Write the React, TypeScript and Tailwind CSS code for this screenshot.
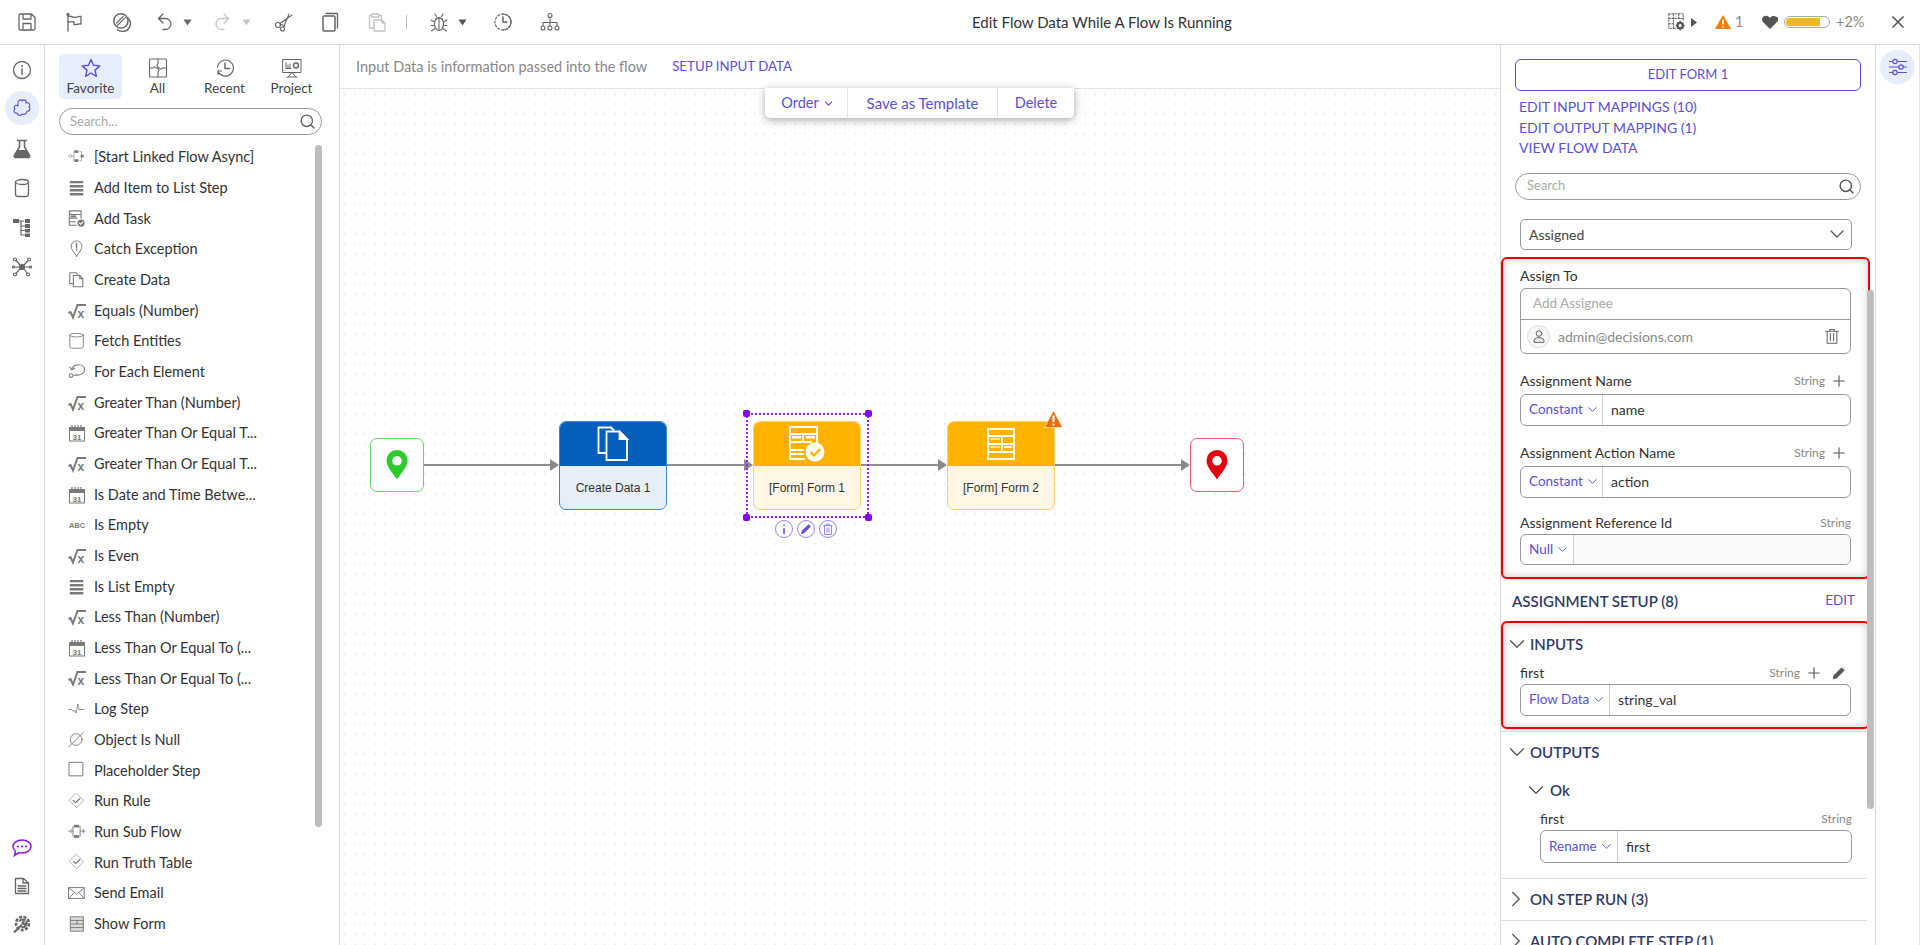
import React from 'react';
import { ChevronDown, ChevronRight, Plus, Search, X } from 'lucide-react';

type IconKind =
  | 'flow' | 'list' | 'task' | 'pin' | 'copy' | 'sqrt' | 'db' | 'loop' | 'cal'
  | 'abc' | 'pulse' | 'null' | 'square' | 'check' | 'sub' | 'mail' | 'form';

const STEPS: [IconKind, string][] = [
  ['flow', '[Start Linked Flow Async]'],
  ['list', 'Add Item to List Step'],
  ['task', 'Add Task'],
  ['pin', 'Catch Exception'],
  ['copy', 'Create Data'],
  ['sqrt', 'Equals (Number)'],
  ['db', 'Fetch Entities'],
  ['loop', 'For Each Element'],
  ['sqrt', 'Greater Than (Number)'],
  ['cal', 'Greater Than Or Equal T...'],
  ['sqrt', 'Greater Than Or Equal T...'],
  ['cal', 'Is Date and Time Betwe...'],
  ['abc', 'Is Empty'],
  ['sqrt', 'Is Even'],
  ['list', 'Is List Empty'],
  ['sqrt', 'Less Than (Number)'],
  ['cal', 'Less Than Or Equal To (...'],
  ['sqrt', 'Less Than Or Equal To (...'],
  ['pulse', 'Log Step'],
  ['null', 'Object Is Null'],
  ['square', 'Placeholder Step'],
  ['check', 'Run Rule'],
  ['sub', 'Run Sub Flow'],
  ['check', 'Run Truth Table'],
  ['mail', 'Send Email'],
  ['form', 'Show Form'],
];

const Svg = ({ size = 20, color = '#666', sw = 1.3, children }: { size?: number; color?: string; sw?: number; children: React.ReactNode }) => (
  <svg width={size} height={size} viewBox="0 0 20 20" fill="none" stroke={color} strokeWidth={sw} strokeLinecap="round" strokeLinejoin="round" className="shrink-0">
    {children}
  </svg>
);

const Caret = ({ color = '#666' }: { color?: string }) => (
  <svg width="9" height="7" viewBox="0 0 9 7" className="shrink-0"><path d="M0.5 0.5h8L4.5 6.5z" fill={color} /></svg>
);

const StepIcon = ({ kind }: { kind: IconKind }) => {
  const c = '#7a7a7a';
  switch (kind) {
    case 'flow':
      return (
        <Svg size={18} color="#8a8a8a" sw={1}>
          <circle cx="2.5" cy="9" r="1.6" stroke="#aaa" />
          <rect x="7" y="2.5" width="4.5" height="3" fill={c} stroke="none" />
          <rect x="7" y="12.5" width="4.5" height="3" fill={c} stroke="none" />
          <path d="M4 9h2.5M6.5 4v10M13 4h2v10h-2" stroke="#aaa" />
          <rect x="14" y="7.5" width="3.5" height="3" fill={c} stroke="none" />
        </Svg>
      );
    case 'list':
      return (
        <Svg size={18} color={c} sw={2.700}>
          <path d="M2 3.500h15M2 8h15M2 12.500h15M2 17h15" strokeLinecap="butt" />
        </Svg>
      );
    case 'task':
      return (
        <Svg size={18} color={c} sw={1.2}>
          <path d="M9 17H1.500V1h13v8" />
          <path d="M2 5h12M2 9h8M2 13h6" />
          <rect x="3" y="6" width="6" height="2" fill={c} stroke="none" />
          <circle cx="14.500" cy="14.500" r="4" fill={c} stroke="none" />
          <path d="M12.700 14.500l1.400 1.400 2.300-2.500" stroke="#fff" />
        </Svg>
      );
    case 'pin':
      return (
        <Svg size={18} color={c} sw={1.1}>
          <path d="M9.500 18C6.500 13.500 3.500 10.500 3.500 7a6 6 0 0 1 12 0c0 3.500-3 6.500-6 11z" />
          <path d="M9.500 3.500v5M9.500 10.300v.8" strokeWidth="1.500" />
        </Svg>
      );
    case 'copy':
      return (
        <Svg size={18} color={c} sw={1.2}>
          <path d="M5 14H2V2h7l2 2" />
          <path d="M6 5h7l3.500 3.500V17.500H6zM13 5v3.500h3.500" />
        </Svg>
      );
    case 'sqrt':
      return (
        <svg width="18" height="18" viewBox="0 0 18 18" className="shrink-0">
          <path d="M0.500 11l2-1 2.500 5.500L9.500 3H18" fill="none" stroke={c} strokeWidth="2" />
          <text x="9.500" y="15.500" fontSize="12" fontWeight="700" fill={c} fontFamily="Liberation Sans, sans-serif">x</text>
        </svg>
      );
    case 'db':
      return (
        <Svg size={18} color={c} sw={1}>
          <ellipse cx="9.500" cy="3.500" rx="7.500" ry="2" />
          <path d="M2 3.500V16q0 2 2 2h11q2 0 2-2V3.500" />
        </Svg>
      );
    case 'loop':
      return (
        <Svg size={18} color={c} sw={1.2}>
          <path d="M4 7.500C5 3 9 2 12 2c4 0 6.500 2.500 6.500 5.500S15.500 13.500 11 13.500H7" />
          <path d="M4.500 7.500L2 4.500M4.500 7.500l3-2" />
          <circle cx="3.500" cy="14" r="2" />
        </Svg>
      );
    case 'cal':
      return (
        <svg width="18" height="18" viewBox="0 0 18 18" className="shrink-0">
          <rect x="1.500" y="3.500" width="15" height="13.500" fill="none" stroke={c} />
          <path d="M1.500 4h15v3h-15z" fill={c} />
          <path d="M4 1v3M7 1v3M10 1v3M13 1v3" stroke={c} strokeWidth="1.200" />
          <text x="9" y="15.500" fontSize="8" fontWeight="700" textAnchor="middle" fill={c} fontFamily="Liberation Sans, sans-serif">31</text>
        </svg>
      );
    case 'abc':
      return (
        <svg width="18" height="18" viewBox="0 0 18 18" className="shrink-0">
          <text x="9" y="12" fontSize="7.500" fontWeight="700" textAnchor="middle" fill={c} fontFamily="Liberation Sans, sans-serif">ABC</text>
        </svg>
      );
    case 'pulse':
      return (
        <Svg size={18} color={c} sw={0.9}>
          <path d="M0 10.500h4l1.500 2 2-1 1.500 3 2-10 1.500 7 1-1h4.500" />
        </Svg>
      );
    case 'null':
      return (
        <Svg size={18} color={c} sw={1}>
          <circle cx="9" cy="9.500" r="6.500" />
          <path d="M1 17.500L17 1.500" />
        </Svg>
      );
    case 'square':
      return (
        <Svg size={18} color={c} sw={1.100}>
          <rect x="1.500" y="1.500" width="15" height="15" />
        </Svg>
      );
    case 'check':
      return (
        <Svg size={18} color="#aaa" sw={1}>
          <path d="M9.500 1.500l8 8-8 8-8-8z" />
          <path d="M6 9.500l2.500 2.300 4.500-4.300" stroke="#777" strokeWidth="1.400" />
        </Svg>
      );
    case 'sub':
      return (
        <Svg size={18} color={c} sw={1}>
          <path d="M0.500 9H4M3 7l2 2-2 2M14 9h5M17 7v4" />
          <rect x="6.500" y="2" width="6" height="3" fill={c} stroke="none" />
          <rect x="6.500" y="13.500" width="6" height="3" fill={c} stroke="none" />
          <path d="M5.500 4v10.500M13.500 4v10.500" />
        </Svg>
      );
    case 'mail':
      return (
        <Svg size={18} color={c} sw={1.100}>
          <rect x="1" y="4" width="17" height="12" />
          <path d="M1 4.500l8.500 6.500L18 4.500M1 16l6-6.500M18 16l-6-6.500" />
        </Svg>
      );
    case 'form':
      return (
        <Svg size={18} color={c} sw={1.100}>
          <rect x="3" y="2" width="14" height="16" fill="#ddd" />
          <path d="M3 6h14M3 10h14M3 14h14M10 6v4" />
        </Svg>
      );
  }
};

const TopBar = () => (
  <header className="h-[45px] shrink-0 border-b border-[#d9d9d9] flex items-center text-[#333]">
    <div className="w-[972px] shrink-0 flex items-center pl-[17px]">
      <div className="w-[47px]">
        <Svg><path d="M2 3.500Q2 2 3.500 2h11L18 5.500v11q0 1.500-1.500 1.500h-13Q2 18 2 16.500zM6 2v5h8V2M6 18v-6.500h8V18" /></Svg>
      </div>
      <div className="w-[47px]">
        <Svg><path d="M4 3v16M4 4.500c3-1 5 1 7 1s3-1.500 6-1V12c-3-.5-4 1-7 .5V10c-2-.5-4-.5-6 .5" /><circle cx="4" cy="2.500" r="1" /></Svg>
      </div>
      <div className="w-[44px]">
        <Svg size={22}>
          <circle cx="9" cy="9" r="6.500" />
          <path d="M15.500 6.500a7 7 0 0 1-5.500 12 6 6 0 0 1-4-1.500" />
          <path d="M5 11l6-6M6 13l7-7" strokeWidth="1.100" />
        </Svg>
      </div>
      <div className="w-[57px] flex items-center gap-[8px]">
        <Svg><path d="M8 2L3.500 6.500 8 11M4 6.500h6.500a4.500 4.500 0 0 1 0 11H8" /></Svg>
        <Caret />
      </div>
      <div className="w-[62px] flex items-center gap-[10px]">
        <Svg color="#c4c4c4"><path d="M12 2l4.500 4.500L12 11M16 6.500H9.500a4.500 4.500 0 0 0 0 11H12" /></Svg>
        <Caret color="#c4c4c4" />
      </div>
      <div className="w-[47px]">
        <Svg sw={1.100}><circle cx="4" cy="13" r="2.500" /><circle cx="8.500" cy="17" r="2" /><path d="M6 11.500L18 3M9.500 15.500L15 2M6 12l5 2" /></Svg>
      </div>
      <div className="w-[46px]">
        <Svg><rect x="2" y="4" width="12" height="15" rx="1" strokeWidth="1.500" /><path d="M5 1.500h11.500V16" /></Svg>
      </div>
      <div className="w-[39px]">
        <Svg color="#c4c4c4"><path d="M7 16H2.500V3.500H5M12 3.500h2.500V7M5 2h7v3H5z" /><path d="M7 8h8l3 3v8H7zM15 8v3h3" /></Svg>
      </div>
      <div className="w-px h-[14px] bg-[#bbb] mr-[22px]" />
      <div className="w-[30px]">
        <Svg size={20} sw={1.100}><ellipse cx="10" cy="12" rx="4.500" ry="6.500" /><path d="M6.500 7.500q3.500-3.500 7 0M7.500 4.500L6 2M12.500 4.500L14 2M5.500 10L2 8M5.500 13.500H2M6 16.500l-3.500 2.500M14.500 10L18 8M14.500 13.500H18M14 16.500l3.500 2.500M10 6v12" /></Svg>
      </div>
      <div className="mr-[31px] -ml-[1px]"><Caret color="#555" /></div>
      <div className="w-[47px] -ml-[5px]">
        <Svg sw={1.200}><circle cx="10" cy="10" r="8" strokeDasharray="2 2" /><path d="M10 5v5h4" strokeWidth="1.500" /><path d="M10 2a8 8 0 0 1 8 8 8 8 0 0 1-8 8" /></Svg>
      </div>
      <Svg sw={1.100}>
        <circle cx="10" cy="3.500" r="2" /><circle cx="3" cy="16" r="2" /><circle cx="10" cy="16" r="2" /><circle cx="17" cy="16" r="2" />
        <path d="M10 5.500V14M3 14v-3.500h14V14" />
      </Svg>
    </div>
    <div className="text-[15px]">Edit Flow Data While A Flow Is Running</div>
    <div className="ml-auto flex items-center text-[14.500px] text-[#888] pr-[12px]">
      <Svg size={18} color="#555" sw={1}>
        <path d="M1 1h16v8M1 1v16h8" strokeDasharray="2 1.500" />
        <path d="M1 6h16M1 12h7M6 1v16M12 1v7" strokeDasharray="2 1.500" />
        <circle cx="13.500" cy="14" r="3" strokeWidth="2.500" />
        <path d="M13.500 9v2M13.500 17v2M9 14h2M16 14h2M10.500 11l1 1M16.500 11l-1 1M10.500 17l1-1M16.500 17l-1-1" strokeWidth="1.500" />
      </Svg>
      <svg width="6" height="9" viewBox="0 0 6 9" className="ml-[5px] mr-[18px]"><path d="M0 0l6 4.500L0 9z" fill="#555" /></svg>
      <svg width="16" height="14" viewBox="0 0 16 14"><path d="M8 0l8 14H0z" fill="#f57c00" /><path d="M8 4.500v5M8 11v1.500" stroke="#fff" strokeWidth="1.600" /></svg>
      <span className="ml-[4px] w-[27px]">1</span>
      <svg width="16" height="14" viewBox="0 0 16 14"><path d="M8 14L1 7Q-1 4 1 2t4.500-1Q7 1.500 8 3q1-1.500 2.500-2T15 2t0 5z" fill="#555" /></svg>
      <div className="ml-[6px] w-[46px] h-[12px] border border-[#aaa] rounded-full p-px">
        <div className="h-full w-[34px] bg-[#f0b81f] rounded-l-full" />
      </div>
      <span className="ml-[6px] w-[52px]">+2%</span>
      <X size={20} color="#555" strokeWidth={2} />
    </div>
  </header>
);

const LeftRail = () => (
  <nav className="w-[45px] shrink-0 border-r border-[#d9d9d9] flex flex-col items-center pt-[5px] pb-[2px]">
    <div className="h-[39px] flex items-center">
      <Svg><circle cx="10" cy="10" r="8.500" /><path d="M10 9v5.500M10 5.500v1" strokeWidth="1.500" /></Svg>
    </div>
    <div className="w-[34px] h-[34px] rounded-full bg-[#e6edfc] flex items-center justify-center mt-[2px]">
      <Svg color="#5a4fd8" sw={1.100}>
        <path d="M6 5c0-3 3-4 4-2 1-2 5-1 4 2 3-1 5 2 3 4 2 2 0 5-2 4 0 3-3 4-5 3-1 2-4 2-5-1-3 1-4-3-2-4-2-2 0-5 3-3z" />
      </Svg>
    </div>
    <div className="h-[39px] flex items-center mt-[4px]">
      <svg width="20" height="20" viewBox="0 0 20 20"><path d="M5 1.500h10M7.500 2v6L2.500 16q-1 2 1 2.500h13q2-.5 1-2.500L12.500 8V2" fill="none" stroke="#666" strokeWidth="1.500" /><path d="M5.500 11h9l3 6q0 1.500-1 1.500h-13q-1 0-1-1.500z" fill="#666" /></svg>
    </div>
    <div className="h-[40px] flex items-center">
      <Svg><ellipse cx="10" cy="4" rx="6.500" ry="2.500" /><path d="M3.500 4v12q0 2.500 2.500 2.500h8q2.500 0 2.500-2.500V4" /></Svg>
    </div>
    <div className="h-[39px] flex items-center">
      <svg width="20" height="20" viewBox="0 0 20 20"><path d="M7 3h5M9 3v14h4M9 8h4M9 12.500h4" fill="none" stroke="#666" strokeWidth="1.200" /><rect x="1" y="1" width="6" height="4" fill="#666" /><rect x="13" y="1" width="5" height="4" fill="#666" /><rect x="13" y="6" width="5" height="4" fill="#666" /><rect x="13" y="11" width="5" height="3.500" fill="#666" /><rect x="13" y="15.500" width="5" height="3.500" fill="#666" /></svg>
    </div>
    <div className="h-[40px] flex items-center">
      <Svg sw={1.200}>
        <circle cx="10" cy="10" r="2.500" fill="#666" />
        <path d="M8 8L4 3.500M12 8l4-4.500M8 12l-4 4.500M12 12l3 4M7.500 10H2.500M12.500 10h5" />
        <circle cx="3" cy="2.500" r="1.500" /><circle cx="17" cy="2.500" r="1.500" /><circle cx="3" cy="17.500" r="1.500" /><circle cx="16" cy="17.500" r="1.500" /><circle cx="1.500" cy="10" r="1" /><circle cx="18.500" cy="10" r="1" />
      </Svg>
    </div>
    <div className="mt-auto h-[38px] flex items-center">
      <svg width="20" height="18" viewBox="0 0 20 18"><path d="M10 1c5 0 9 2.800 9 6.500S15 14 10 14c-1 0-2 0-3-.4L2.500 16.500 3.500 12.500C2 11 1 9.500 1 7.500 1 3.800 5 1 10 1z" fill="none" stroke="#8a14e8" strokeWidth="1.500" /><circle cx="6" cy="7.500" r="1.100" fill="#8a14e8" /><circle cx="10" cy="7.500" r="1.100" fill="#8a14e8" /><circle cx="14" cy="7.500" r="1.100" fill="#8a14e8" /></svg>
    </div>
    <div className="h-[38px] flex items-center">
      <Svg><path d="M3.500 2.500h8L16.500 7v10.500h-13zM11 2.500V7h5.500M6 10h8M6 12.500h8M6 15h8" /></Svg>
    </div>
    <div className="h-[38px] flex items-center">
      <svg width="20" height="20" viewBox="0 0 20 20">
        <circle cx="10.500" cy="9.500" r="6.500" fill="none" stroke="#666" strokeWidth="2.600" strokeDasharray="3 1.400" />
        <path d="M2 18.500L10 10.500M7.500 7.500a4 4 0 0 1 5-1.500l-2 3 2 1.500 2-2.500a4 4 0 0 1-5 5" fill="none" stroke="#666" strokeWidth="2" />
      </svg>
    </div>
  </nav>
);

const Tab = ({ label, active, children }: { label: string; active?: boolean; children: React.ReactNode }) => (
  <div className={`w-[63px] h-[45px] rounded-[5px] flex flex-col items-center pt-[4px] ${active ? 'bg-[#e6edfc]' : ''}`}>
    <div className="h-[20px] flex items-center">{children}</div>
    <div className="text-[13.500px] leading-[16px] mt-[2px] text-[#444]">{label}</div>
  </div>
);

const Palette = () => (
  <aside className="w-[295px] shrink-0 border-r border-[#d9d9d9] relative overflow-hidden">
    <div className="flex gap-[4px] pl-[14px] pt-[9px]">
      <Tab label="Favorite" active>
        <svg width="20" height="20" viewBox="0 0 20 20"><path d="M10 1.500l2.500 5.800 6.300.6-4.800 4.200 1.400 6.200L10 15l-5.400 3.300L6 12.100 1.200 7.900l6.300-.6z" fill="none" stroke="#5a4fd8" strokeWidth="1.400" strokeLinejoin="round" /></svg>
      </Tab>
      <Tab label="All">
        <Svg sw={1.100}>
          <rect x="1.500" y="1" width="17" height="18" rx="1" />
          <path d="M10 1v5q-2 1 0 3v2q2 1 0 3v5M1.500 10h4q1-2 3 0h3q1 2 3 0h4" />
        </Svg>
      </Tab>
      <Tab label="Recent">
        <Svg sw={1.200}>
          <path d="M3 13a8 8 0 1 0-.5-4M3 16.500V13h3.500" />
          <path d="M10 5v5.500h4.500" strokeWidth="1.500" />
        </Svg>
      </Tab>
      <Tab label="Project">
        <Svg sw={1}>
          <rect x="1" y="1.500" width="18" height="13" />
          <path d="M4 4.500v6h5M6 10V7M8 10V6M6 19l4-4.500 4 4.500M5 19h10" />
          <circle cx="14" cy="7.500" r="2.500" strokeWidth="1.400" />
        </Svg>
      </Tab>
    </div>
    <div className="ml-[14px] mt-[9px] w-[263px] h-[27px] rounded-full border border-[#999] flex items-center pl-[10px] pr-[5px] text-[13px] text-[#aaa]">
      Search...
      <Search size={17} color="#666" strokeWidth={2} className="ml-auto" />
    </div>
    <ul className="mt-[7px]">
      {STEPS.map(([kind, label], i) => (
        <li key={i} className="h-[30.670px] flex items-center gap-[8px] pl-[23px] text-[14.500px] text-[#333] whitespace-nowrap">
          <StepIcon kind={kind} />
          <span>{label}</span>
        </li>
      ))}
    </ul>
    <div className="absolute left-[270px] top-[100px] w-[7px] h-[682px] bg-[#bdbdbd] rounded-full" />
  </aside>
);

const Arrow = ({ left, width }: { left: number; width: number }) => (
  <div className="absolute h-[12px] flex items-center" style={{ left, width, top: 370 }}>
    <div className="flex-1 h-[1.500px] bg-[#8f8f8f]" />
    <svg width="9" height="12" viewBox="0 0 9 12" className="shrink-0"><path d="M0 0l9 6-9 6z" fill="#8a8a8a" /></svg>
  </div>
);

const MarkerPin = ({ color }: { color: string }) => (
  <svg width="22" height="30" viewBox="0 0 22 30"><path fillRule="evenodd" d="M11 29.500C7 23 .500 17.500.500 10.500a10.500 10.500 0 0 1 21 0C21.500 17.500 15 23 11 29.500zM11 6a4.800 4.800 0 1 0 0 9.600A4.800 4.800 0 0 0 11 6z" fill={color} /></svg>
);

const StepNode = ({ label, head, body, border, children, x }: { label: string; head: string; body: string; border: string; children: React.ReactNode; x: number }) => (
  <div className="absolute w-[108px] h-[89px] rounded-[7px] border overflow-hidden flex flex-col font-['Liberation_Sans',sans-serif]" style={{ left: x, top: 332, borderColor: border, background: body }}>
    <div className="h-[44px] shrink-0 flex items-center justify-center" style={{ background: head }}>{children}</div>
    <div className="flex-1 flex items-center justify-center text-[12px] text-[#333]">{label}</div>
  </div>
);

const Handle = ({ className }: { className: string }) => (
  <div className={`absolute w-[7px] h-[7px] rounded-[2px] bg-[#8a00f0] ${className}`} />
);

const Canvas = () => (
  <main className="w-[1160px] shrink-0 flex flex-col">
    <div className="h-[44px] shrink-0 border-b border-[#e3e3e3] flex items-center pl-[16px] text-[14.500px] text-[#888]">
      <span>Input Data is information passed into the flow</span>
      <span className="ml-[25px] text-[#5a4fd8] text-[13.300px]">SETUP INPUT DATA</span>
    </div>
    <div className="relative flex-1 bg-[radial-gradient(#dedede_0.6px,transparent_0.8px)] bg-[length:10px_10px]">
      <div className="absolute left-[425px] top-[-1px] h-[30px] w-[309px] bg-white rounded-b-[5px] shadow-[0_2px_8px_rgba(0,0,0,0.35)] flex items-center text-[14.500px] text-[#5a4fd8]">
        <div className="w-[83px] h-full border-r border-[#e3e3e3] flex items-center justify-center gap-[3px] pl-[4px]">
          Order <ChevronDown size={13} />
        </div>
        <div className="w-[150px] h-full border-r border-[#e3e3e3] flex items-center justify-center text-[15px]">Save as Template</div>
        <div className="flex-1 flex items-center justify-center">Delete</div>
      </div>

      <Arrow left={84} width={135} />
      <Arrow left={327} width={86} />
      <Arrow left={521} width={86} />
      <Arrow left={715} width={135} />

      <div className="absolute left-[30px] top-[349px] w-[54px] h-[54px] rounded-[7px] border border-[#62d862] bg-white flex items-center justify-center">
        <MarkerPin color="#2ccb2c" />
      </div>

      <StepNode x={219} label="Create Data 1" head="#035fba" body="#e6eef8" border="#3f88cf">
        <svg width="32" height="36" viewBox="0 0 32 36" fill="none" stroke="#fff" strokeWidth="1.800"><path d="M9 27H1.500V1.500H14l3 3" /><path d="M9.500 5.500h13L30 13v21H9.500zM22.500 6v7H30" /><path d="M23 6l7 7h-7z" fill="#fff" /></svg>
      </StepNode>

      <StepNode x={413} label="[Form] Form 1" head="#ffb300" body="#fff6e5" border="#ffd071">
        <svg width="36" height="36" viewBox="0 0 36 36" fill="none" stroke="#fff" strokeWidth="1.800">
          <path d="M16 33H1V1h27v16" />
          <path d="M1 8h27M1 16h22M1 24h14M1 28h14M14 8v8" />
          <rect x="3" y="10" width="9" height="2.500" fill="#fff" stroke="none" />
          <rect x="17" y="10" width="9" height="2.500" fill="#fff" stroke="none" />
          <circle cx="26" cy="26" r="9.500" fill="#fff" stroke="none" />
          <path d="M21.500 26l3.500 3.500 6-6.500" stroke="#ffb300" strokeWidth="2.400" />
        </svg>
      </StepNode>

      <div className="absolute left-[406px] top-[324px] w-[123px] h-[105px] border-2 border-dotted border-[#9a1ff0]">
        <Handle className="left-[-5px] top-[-5px]" />
        <Handle className="right-[-5px] top-[-5px]" />
        <Handle className="left-[-5px] bottom-[-5px]" />
        <Handle className="right-[-5px] bottom-[-5px]" />
      </div>

      <div className="absolute left-[435px] top-[431px] flex gap-[4px]">
        <div className="w-[18px] h-[18px] rounded-full border border-[#8f88e6] flex items-center justify-center text-[#5a4fd8]">
          <svg width="10" height="12" viewBox="0 0 10 12"><path d="M5 5v6M5 1.500v1.500" stroke="#5a4fd8" strokeWidth="1.500" /></svg>
        </div>
        <div className="w-[18px] h-[18px] rounded-full border border-[#8f88e6] flex items-center justify-center">
          <svg width="12" height="12" viewBox="0 0 12 12"><path d="M1 11l.7-3L8.500 1.200 10.800 3.500 4 10.300z" fill="#5a4fd8" /></svg>
        </div>
        <div className="w-[18px] h-[18px] rounded-full border border-[#8f88e6] flex items-center justify-center">
          <svg width="12" height="12" viewBox="0 0 12 12" fill="none" stroke="#8f88e6"><path d="M1.500 2.500h9M4.500 2.500V1h3v1.500M2.500 2.500v9h7v-9M5 4.500v5M7 4.500v5" /></svg>
        </div>
      </div>

      <StepNode x={607} label="[Form] Form 2" head="#ffb300" body="#fff6e5" border="#ffd071">
        <svg width="28" height="32" viewBox="0 0 28 32" fill="none" stroke="#fff" strokeWidth="1.800">
          <rect x="1" y="1" width="26" height="30" />
          <path d="M1 8h26M1 16h26M1 24h26M15 8v8M15 24V16" />
          <rect x="3" y="10" width="10" height="2" fill="#ffe08a" stroke="none" />
          <rect x="17" y="18" width="8" height="2" fill="#fff" stroke="none" />
          <rect x="3" y="18" width="10" height="2" fill="#ffe08a" stroke="none" />
        </svg>
      </StepNode>
      <svg width="19" height="18" viewBox="0 0 19 18" className="absolute left-[704px] top-[321px]"><path d="M9.500 0.500l9 17h-18z" fill="#ef6c00" stroke="#fff" strokeWidth="0.600" /><path d="M9.500 5.500v6.500M9.500 13.500v2" stroke="#fff" strokeWidth="2.200" /></svg>

      <div className="absolute left-[850px] top-[349px] w-[54px] h-[54px] rounded-[7px] border border-[#ee5c68] bg-white flex items-center justify-center">
        <MarkerPin color="#e3000f" />
      </div>
    </div>
  </main>
);

const Label = ({ children }: { children: React.ReactNode }) => (
  <span className="text-[14px] text-[#333] leading-[20px]">{children}</span>
);

const TypeTag = () => <span className="text-[12px] text-[#888] leading-[16px]">String</span>;

const MappedInput = ({ mode, value, modeWidth, height = 32 }: { mode: string; value?: string; modeWidth: number; height?: number }) => (
  <div className="border border-[#999] rounded-[6px] flex items-center text-[14px] overflow-hidden whitespace-nowrap" style={{ height }}>
    <div className="h-full shrink-0 border-r border-[#ccc] flex items-center pl-[8px] gap-[2px] text-[13.500px] text-[#5a4fd8]" style={{ width: modeWidth }}>
      {mode}
      <ChevronDown size={15} strokeWidth={1.500} />
    </div>
    {value ? (
      <span className="pl-[8px] text-[#333]">{value}</span>
    ) : (
      <div className="flex-1 h-full bg-[#f9f9f9]" />
    )}
  </div>
);

const SectionTitle = ({ children }: { children: React.ReactNode }) => (
  <span className="text-[15px] font-semibold text-[#2f3a66] leading-[20px]">{children}</span>
);

const Highlight = ({ height, children }: { height: number; children: React.ReactNode }) => (
  <div className="w-[369px] border-2 border-[#f00000] rounded-[6px] bg-white shadow-[inset_0_0_8px_rgba(0,0,0,0.22),0_1px_3px_rgba(0,0,0,0.15)]" style={{ height }}>
    {children}
  </div>
);

const PlusIcon = () => <Plus size={18} color="#555" strokeWidth={1.500} />;

const Inspector = () => (
  <section className="w-[376px] shrink-0 border-x border-[#d9d9d9] relative overflow-hidden">
    <div className="mx-[14px] mt-[14px] h-[32px] border border-[#5a4fd8] rounded-[6px] flex items-center justify-center text-[13px] text-[#5a4fd8]">
      EDIT FORM 1
    </div>
    <div className="ml-[18px] mt-[6px] text-[14px] leading-[20.500px] text-[#5a4fd8]">
      <div>EDIT INPUT MAPPINGS (10)</div>
      <div>EDIT OUTPUT MAPPING (1)</div>
      <div>VIEW FLOW DATA</div>
    </div>
    <div className="mx-[14px] mt-[14px] h-[27px] border border-[#999] rounded-full flex items-center pl-[11px] pr-[5px] text-[13px] text-[#aaa]">
      Search
      <Search size={17} color="#555" strokeWidth={2} className="ml-auto" />
    </div>
    <div className="ml-[19px] mt-[19px] w-[332px] h-[31px] border border-[#999] rounded-[5px] flex items-center justify-between pl-[8px] pr-[2px] text-[14px] text-[#444]">
      Assigned
      <ChevronDown size={24} color="#555" strokeWidth={1.200} />
    </div>

    <div className="mt-[7px]">
      <Highlight height={322}>
        <div className="px-[17px] pt-[6px] h-full">
          <div className="h-[20px] leading-[20px]"><Label>Assign To</Label></div>
          <div className="mt-[3px] h-[66px] border border-[#999] rounded-[6px] text-[14px]">
            <div className="h-[31px] border-b border-[#999] flex items-center pl-[12px] text-[13.500px] text-[#aaa]">Add Assignee</div>
            <div className="h-[33px] flex items-center pl-[6px] pr-[10px] text-[#888]">
              <div className="w-[23px] h-[23px] rounded-full border border-[#ddd] bg-[#f7f7f7] flex items-center justify-center">
                <Svg size={14} sw={1.300} color="#555"><circle cx="10" cy="6.500" r="4" /><path d="M3 18.500v-2q0-3 4-4h6q4 1 4 4v2z" /></Svg>
              </div>
              <span className="ml-[8px]">admin@decisions.com</span>
              <span className="ml-auto"><Svg size={16} sw={1.300}><path d="M2 4h16M7 4V2h6v2M4 4v15h12V4M8 7v9M12 7v9" /></Svg></span>
            </div>
          </div>

          <div className="mt-[17px] flex items-center justify-between h-[21px] pr-[3px]">
            <Label>Assignment Name</Label>
            <div className="flex items-center gap-[5px]"><TypeTag /><PlusIcon /></div>
          </div>
          <div className="mt-[2px]"><MappedInput mode="Constant" value="name" modeWidth={82} /></div>

          <div className="mt-[17px] flex items-center justify-between h-[21px] pr-[3px]">
            <Label>Assignment Action Name</Label>
            <div className="flex items-center gap-[5px]"><TypeTag /><PlusIcon /></div>
          </div>
          <div className="mt-[2px]"><MappedInput mode="Constant" value="action" modeWidth={82} /></div>

          <div className="mt-[15px] flex items-center justify-between h-[20px]">
            <Label>Assignment Reference Id</Label>
            <TypeTag />
          </div>
          <div className="mt-[1px]"><MappedInput mode="Null" modeWidth={53} height={31} /></div>
        </div>
      </Highlight>
    </div>

    <div className="mt-[12px] h-[20px] flex items-center justify-between pl-[11px] pr-[15px] w-[369px]">
      <SectionTitle>ASSIGNMENT SETUP (8)</SectionTitle>
      <span className="text-[13.500px] text-[#5a4fd8]">EDIT</span>
    </div>

    <div className="mt-[10px]">
      <Highlight height={108}>
        <div className="px-[17px] pt-[11px]">
          <div className="h-[20px] flex items-center -ml-[16px]">
            <ChevronDown size={26} color="#555" strokeWidth={1.200} />
            <SectionTitle>INPUTS</SectionTitle>
          </div>
          <div className="mt-[9px] h-[20px] flex items-center justify-between pr-[5px]">
            <Label>first</Label>
            <div className="flex items-center gap-[5px]">
              <TypeTag /><PlusIcon />
              <svg width="14" height="14" viewBox="0 0 14 14" className="ml-[4px]"><path d="M1 13l.8-3.500L9.500 1.800l2.700 2.700L4.500 12.200zM10.300 1l2.700 2.700" fill="#555" stroke="#555" strokeWidth="0.500" /></svg>
            </div>
          </div>
          <div className="mt-[1px]"><MappedInput mode="Flow Data" value="string_val" modeWidth={89} /></div>
        </div>
      </Highlight>
    </div>

    <div className="w-[366px] border-t border-[#ddd] mt-[2px] pt-[10px] h-[147px]">
      <div className="h-[20px] flex items-center pl-[3px]">
        <ChevronDown size={26} color="#555" strokeWidth={1.200} />
        <SectionTitle>OUTPUTS</SectionTitle>
      </div>
      <div className="mt-[18px] h-[20px] flex items-center pl-[22px]">
        <ChevronDown size={26} color="#555" strokeWidth={1.200} />
        <span className="ml-[1px]"><SectionTitle>Ok</SectionTitle></span>
      </div>
      <div className="ml-[39px] w-[312px]">
        <div className="mt-[9px] h-[20px] flex items-center justify-between">
          <Label>first</Label>
          <TypeTag />
        </div>
        <div className="mt-[1px]"><MappedInput mode="Rename" value="first" modeWidth={77} height={33} /></div>
      </div>
    </div>
    <div className="w-[366px] h-[42px] border-t border-[#ddd] flex items-center pl-[2px]">
      <ChevronRight size={26} color="#555" strokeWidth={1.200} />
      <span className="ml-[1px]"><SectionTitle>ON STEP RUN (3)</SectionTitle></span>
    </div>
    <div className="w-[366px] h-[42px] border-t border-[#ddd] flex items-center pl-[2px]">
      <ChevronRight size={26} color="#555" strokeWidth={1.200} />
      <span className="ml-[1px]"><SectionTitle>AUTO COMPLETE STEP (1)</SectionTitle></span>
    </div>

    <div className="absolute left-[366px] top-[245px] w-[7px] h-[519px] bg-[#bdbdbd] rounded-full" />
  </section>
);

const RightRail = () => (
  <div className="w-[44px] shrink-0 border-r border-[#e3e3e3] flex justify-center pt-[5px]">
    <div className="w-[35px] h-[34px] rounded-full bg-[#e6edfc] flex items-center justify-center">
      <Svg color="#5a4fd8" sw={1.200}>
        <path d="M1.500 4.500h17M1.500 10h17M1.500 15.500h17" />
        <circle cx="7" cy="4.500" r="2.200" fill="#e6edfc" />
        <circle cx="13" cy="10" r="2.200" fill="#e6edfc" />
        <circle cx="7" cy="15.500" r="2.200" fill="#e6edfc" />
      </Svg>
    </div>
  </div>
);

const App = () => {
  return (
    <div className="w-[1920px] h-[945px] overflow-hidden flex flex-col bg-white font-['Lato',sans-serif]">
      <TopBar />
      <div className="flex flex-1 min-h-0">
        <LeftRail />
        <Palette />
        <Canvas />
        <Inspector />
        <RightRail />
      </div>
    </div>
  );
};

export default App;
